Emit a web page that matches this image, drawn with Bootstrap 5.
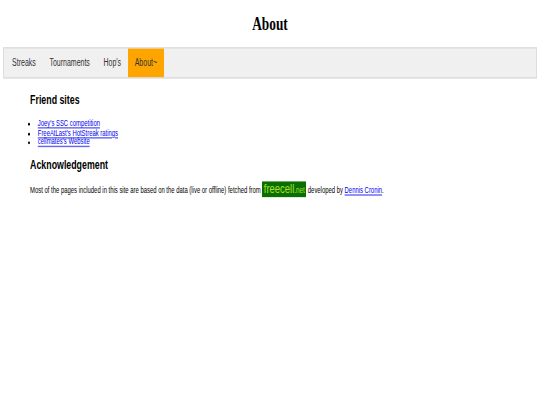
<!DOCTYPE html>
<html lang="en">
<head>
<meta charset="utf-8">
<title>About</title>
<link href="https://cdn.jsdelivr.net/npm/bootstrap@5.3.0/dist/css/bootstrap.min.css" rel="stylesheet">
<style>
body { font-family: "Liberation Sans", Arial, sans-serif; color: #000; background: #fff; }
.squeeze { zoom: .7; transform: scaleY(1.42857); transform-origin: 0 0; min-height: 405px; font-size: 8.47px; line-height: 9.5px; }
.page-head { font-family: "Liberation Serif", "Times New Roman", serif; font-weight: 700; font-size: 19px; line-height: 20px; margin: 0; padding: 14px 0 13.6px; text-align: center; }
.top-bar { margin: 0 4px; height: 30.4px; background: #f0f0f0; border: 1px solid #ddd; padding: 0; }
.top-bar .navbar-nav { margin-left: 2.2px; }
.top-bar .navbar-nav .nav-link { color: #333; font-size: 10px; line-height: 28px; padding: 0 9.7px; }
.top-bar .navbar-nav .nav-link.on { background: orange; }
.body-wrap { padding: 0 43px; }
.sec-title { font-size: 12.6px; line-height: 14px; font-weight: 700; margin: 16px 0 10.5px; color: #000; }
.site-list { margin: 0; padding-left: 11px; }
.sec-title.second { margin: 11px 0 9px; }
.ack { margin: 0; white-space: nowrap; display: flex; align-items: baseline; }
.ack a, .site-list a { color: #00e; text-decoration-thickness: .7px; text-decoration-color: rgba(0, 0, 238, .6); }
.fc-logo { display: inline-block; height: 15.5px; margin: 0; padding: 0 2px; background: #0a6f00; color: #a8e02c; font-size: 13.5px; line-height: 15px; }
.fc-logo span { font-size: 9px; }
</style>
</head>
<body>
<div class="squeeze">
<h1 class="page-head">About</h1>
<nav class="navbar navbar-expand top-bar">
  <ul class="navbar-nav h-100">
    <li class="nav-item"><a class="nav-link" href="#">Streaks</a></li>
    <li class="nav-item"><a class="nav-link" href="#">Tournaments</a></li>
    <li class="nav-item"><a class="nav-link" href="#">Hop's</a></li>
    <li class="nav-item"><a class="nav-link on" href="#">About~</a></li>
  </ul>
</nav>
<main class="body-wrap">
  <h2 class="sec-title">Friend sites</h2>
  <ul class="site-list">
    <li><a href="#">Joey's SSC competition</a></li>
    <li><a href="#">FreeAtLast's HotStreak ratings</a></li>
    <li><a href="#">cellmates's Website</a></li>
  </ul>
  <h2 class="sec-title second">Acknowledgement</h2>
  <p class="ack">Most of the pages included in this site are based on the data (live or offline) fetched from&nbsp;<span class="fc-logo">freecell<span>.net</span></span>&nbsp;developed by&nbsp;<a href="#">Dennis Cronin</a>.</p>
</main>
</div>
<script src="https://cdn.jsdelivr.net/npm/bootstrap@5.3.0/dist/js/bootstrap.bundle.min.js"></script>
</body>
</html>
